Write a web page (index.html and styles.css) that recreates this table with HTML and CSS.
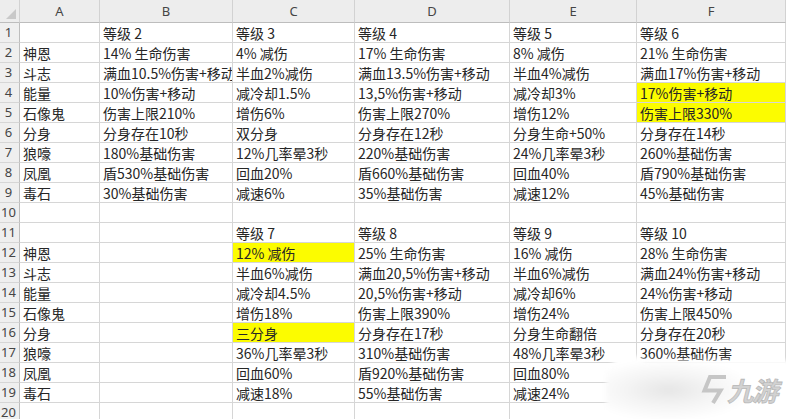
FILE: index.html
```html
<!DOCTYPE html>
<html lang="zh">
<head>
<meta charset="utf-8">
<title>等级表</title>
<link rel="stylesheet" href="styles.css">
</head>
<body>
<div class="sheet">
  <div class="hd corner"><span class="tri"></span></div><div class="hd">A</div><div class="hd">B</div><div class="hd">C</div><div class="hd">D</div><div class="hd">E</div><div class="hd">F</div>

  <div class="rn">1</div><div class="c"></div><div class="c">等级 2</div><div class="c">等级 3</div><div class="c">等级 4</div><div class="c">等级 5</div><div class="c">等级 6</div>
  <div class="rn">2</div><div class="c">神恩</div><div class="c">14% 生命伤害</div><div class="c">4% 减伤</div><div class="c">17% 生命伤害</div><div class="c">8% 减伤</div><div class="c">21% 生命伤害</div>
  <div class="rn">3</div><div class="c">斗志</div><div class="c">满血10.5%伤害+移动</div><div class="c">半血2%减伤</div><div class="c">满血13.5%伤害+移动</div><div class="c">半血4%减伤</div><div class="c">满血17%伤害+移动</div>
  <div class="rn">4</div><div class="c">能量</div><div class="c">10%伤害+移动</div><div class="c">减冷却1.5%</div><div class="c">13,5%伤害+移动</div><div class="c">减冷却3%</div><div class="c hl">17%伤害+移动</div>
  <div class="rn">5</div><div class="c">石像鬼</div><div class="c">伤害上限210%</div><div class="c">增伤6%</div><div class="c">伤害上限270%</div><div class="c">增伤12%</div><div class="c hl">伤害上限330%</div>
  <div class="rn">6</div><div class="c">分身</div><div class="c">分身存在10秒</div><div class="c">双分身</div><div class="c">分身存在12秒</div><div class="c">分身生命+50%</div><div class="c">分身存在14秒</div>
  <div class="rn">7</div><div class="c">狼嚎</div><div class="c">180%基础伤害</div><div class="c">12%几率晕3秒</div><div class="c">220%基础伤害</div><div class="c">24%几率晕3秒</div><div class="c">260%基础伤害</div>
  <div class="rn">8</div><div class="c">凤凰</div><div class="c">盾530%基础伤害</div><div class="c">回血20%</div><div class="c">盾660%基础伤害</div><div class="c">回血40%</div><div class="c">盾790%基础伤害</div>
  <div class="rn">9</div><div class="c">毒石</div><div class="c">30%基础伤害</div><div class="c">减速6%</div><div class="c">35%基础伤害</div><div class="c">减速12%</div><div class="c">45%基础伤害</div>
  <div class="rn">10</div><div class="c"></div><div class="c"></div><div class="c"></div><div class="c"></div><div class="c"></div><div class="c"></div>
  <div class="rn">11</div><div class="c"></div><div class="c"></div><div class="c">等级 7</div><div class="c">等级 8</div><div class="c">等级 9</div><div class="c">等级 10</div>
  <div class="rn">12</div><div class="c">神恩</div><div class="c"></div><div class="c hl">12% 减伤</div><div class="c">25% 生命伤害</div><div class="c">16% 减伤</div><div class="c">28% 生命伤害</div>
  <div class="rn">13</div><div class="c">斗志</div><div class="c"></div><div class="c">半血6%减伤</div><div class="c">满血20,5%伤害+移动</div><div class="c">半血6%减伤</div><div class="c">满血24%伤害+移动</div>
  <div class="rn">14</div><div class="c">能量</div><div class="c"></div><div class="c">减冷却4.5%</div><div class="c">20,5%伤害+移动</div><div class="c">减冷却6%</div><div class="c">24%伤害+移动</div>
  <div class="rn">15</div><div class="c">石像鬼</div><div class="c"></div><div class="c">增伤18%</div><div class="c">伤害上限390%</div><div class="c">增伤24%</div><div class="c">伤害上限450%</div>
  <div class="rn">16</div><div class="c">分身</div><div class="c"></div><div class="c hl">三分身</div><div class="c">分身存在17秒</div><div class="c">分身生命翻倍</div><div class="c">分身存在20秒</div>
  <div class="rn">17</div><div class="c">狼嚎</div><div class="c"></div><div class="c">36%几率晕3秒</div><div class="c">310%基础伤害</div><div class="c">48%几率晕3秒</div><div class="c">360%基础伤害</div>
  <div class="rn">18</div><div class="c">凤凰</div><div class="c"></div><div class="c">回血60%</div><div class="c">盾920%基础伤害</div><div class="c">回血80%</div><div class="c"></div>
  <div class="rn">19</div><div class="c">毒石</div><div class="c"></div><div class="c">减速18%</div><div class="c">55%基础伤害</div><div class="c">减速24%</div><div class="c"></div>
  <div class="rn">20</div><div class="c"></div><div class="c"></div><div class="c"></div><div class="c"></div><div class="c"></div><div class="c"></div>
</div>

<div class="wm">
  <div class="wm-blur"><div class="wm-panel"></div></div>
  <div class="wm-logo">
    <svg class="wm-icon" width="27" height="31" viewBox="0 0 27 31">
      <path d="M26 3 H10 L4.5 16.5 H20.5 L13 29" fill="none" stroke="#c6c6c6" stroke-width="4" stroke-linejoin="miter"/>
      <path d="M20.5 16.5 L16.5 22" fill="none" stroke="#c6c6c6" stroke-width="2"/>
    </svg>
    <span class="wm-text">九游</span>
  </div>
</div>
</body>
</html>
```

FILE: styles.css
```css
html, body {
  margin: 0;
  padding: 0;
  background: #ffffff;
}

body {
  width: 786px;
  height: 419px;
  overflow: hidden;
  position: relative;
  font-family: "Noto Sans CJK SC", "Noto Sans", sans-serif;
}

.sheet {
  display: grid;
  grid-template-columns: 20px 80px 133px 122px 155px 127px 149px;
  grid-template-rows: 23px repeat(20, 20px);
}

.hd {
  box-sizing: border-box;
  background: #ededed;
  border-right: 1px solid #d2d2d2;
  border-bottom: 1px solid #bdbdbd;
  color: #454545;
  font-family: "Noto Sans", "Liberation Sans", sans-serif;
  font-size: 13px;
  line-height: 22px;
  text-align: center;
}

.corner {
  position: relative;
}

.tri {
  position: absolute;
  right: 3px;
  bottom: 3px;
  width: 0;
  height: 0;
  border-left: 10px solid transparent;
  border-bottom: 10px solid #c9c9c9;
}

.rn {
  box-sizing: border-box;
  background: #efefef;
  border-right: 1px solid #bdbdbd;
  border-bottom: 1px solid #d6d6d6;
  color: #454545;
  font-family: "Noto Sans", "Liberation Sans", sans-serif;
  font-size: 13px;
  line-height: 19px;
  text-align: center;
  padding-right: 2px;
}

.c {
  box-sizing: border-box;
  border-right: 1px solid #d6d6d6;
  border-bottom: 1px solid #d6d6d6;
  color: #262626;
  font-size: 14px;
  line-height: 20px;
  padding-left: 3px;
  white-space: nowrap;
  overflow: hidden;
}

.hl {
  background: #fcfc00;
}

.wm {
  position: absolute;
  left: 600px;
  top: 345px;
  width: 186px;
  height: 74px;
}

.wm-blur {
  position: absolute;
  inset: 0;
  filter: blur(2px);
}

.wm-panel {
  position: absolute;
  left: 6px;
  top: 6px;
  right: -10px;
  bottom: -10px;
  background: radial-gradient(ellipse 45% 40% at 33% 50%, #e6e6e6 0%, #f4f4f4 50%, #ffffff 100%);
  clip-path: polygon(0 26%, 16px 0, 40px 12%, 100% 12%, 100% 100%, 0 100%);
}

.wm-logo {
  position: absolute;
  left: 100px;
  top: 29px;
  display: flex;
  align-items: center;
  gap: 3px;
}

.wm-text {
  display: inline-block;
  color: #d2d2d2;
  -webkit-text-stroke: 0.8px #b9b9b9;
  font-size: 26px;
  font-weight: 700;
  line-height: 30px;
  letter-spacing: -1px;
  transform: skewX(-14deg);
}
```
